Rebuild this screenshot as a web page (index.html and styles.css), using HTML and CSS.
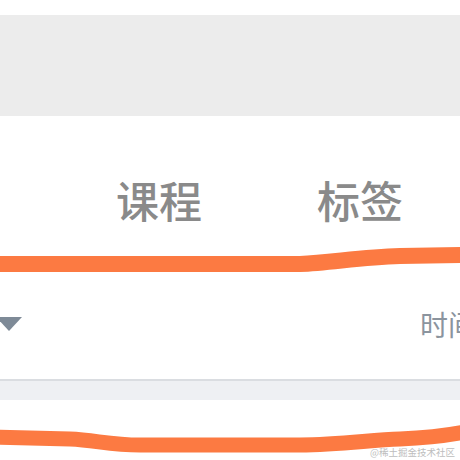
FILE: index.html
```html
<!DOCTYPE html>
<html lang="zh-CN">
<head>
<meta charset="utf-8">
<title>课程 标签</title>
<link rel="stylesheet" href="styles.css">
</head>
<body>
<div class="page">
  <div class="top"></div>
  <div class="banner"></div>
  <nav class="tabs">
    <span class="tab">课程</span>
    <span class="tab">标签</span>
  </nav>
  <div class="filter">
    <span class="caret"></span>
    <span class="sort">时间</span>
  </div>
  <div class="divider"></div>
  <div class="band"></div>
  <div class="rest"></div>
  <svg class="marks" width="460" height="460" viewBox="0 0 460 460" aria-hidden="true">
    <path d="M-5 264 L300 264 C330 263 360 257 400 256 L465 255" />
    <path d="M-5 437 L70 439 C95 440 110 445 140 445 L300 445 C340 445 370 440 400 439 C425 438 445 436 465 432" class="thin"/>
  </svg>
  <span class="watermark">@稀土掘金技术社区</span>
</div>
</body>
</html>
```
FILE: styles.css
```css
* { box-sizing: border-box; }
html, body { margin: 0; padding: 0; background: #ffffff; }
body { font-family: "Noto Sans CJK SC", "Noto Sans", sans-serif; }

.page {
  position: relative;
  width: 460px;
  height: 460px;
  overflow: hidden;
  background: #ffffff;
}

.top { height: 15px; background: #ffffff; }
.banner { height: 101px; background: #ececec; }

.tabs {
  height: 180px;
  display: flex;
  gap: 115px;
  padding-top: 61px;
  padding-left: 116px;
}
.tab {
  font-size: 43px;
  line-height: 44px;
  font-weight: 500;
  color: #8a8a8a;
  white-space: nowrap;
}

.filter {
  height: 83px;
  display: flex;
  align-items: flex-start;
  padding-top: 13px;
}
.caret {
  width: 0;
  height: 0;
  margin-left: -4px;
  margin-top: 8px;
  border-left: 13px solid transparent;
  border-right: 13px solid transparent;
  border-top: 14px solid #7e8a97;
}
.sort {
  margin-left: auto;
  margin-right: -16px;
  font-size: 28px;
  line-height: 30px;
  color: #8b949e;
  white-space: nowrap;
}

.divider { height: 2px; background: #dadde1; }
.band { height: 19px; background: #eef0f3; }
.rest { height: 60px; background: #ffffff; }

.marks {
  position: absolute;
  left: 0;
  top: 0;
  pointer-events: none;
}
.marks path {
  fill: none;
  stroke: #fc7a42;
  stroke-width: 16;
  stroke-linecap: round;
  stroke-linejoin: round;
}
.marks path.thin { stroke-width: 15; }

.watermark {
  position: absolute;
  right: 5px;
  bottom: 2px;
  font-size: 9.5px;
  line-height: 11px;
  color: #bdbdbd;
  white-space: nowrap;
}
```
